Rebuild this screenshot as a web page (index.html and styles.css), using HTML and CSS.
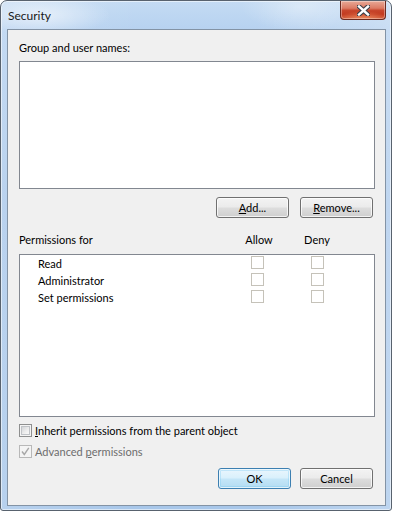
FILE: index.html
```html
<!DOCTYPE html>
<html>
<head>
<meta charset="utf-8">
<title>Security</title>
<link rel="stylesheet" href="styles.css">
</head>
<body>
<div class="window">
  <div class="titlebar">
    <span class="title">Security</span>
    <div class="close">
      <svg width="13" height="11" viewBox="0 0 13 11">
        <path d="M2 1.5 L11 9.5 M11 1.5 L2 9.5" stroke="#3a3f48" stroke-width="4.6" stroke-linecap="square" fill="none"/>
        <path d="M2 1.5 L11 9.5 M11 1.5 L2 9.5" stroke="#ffffff" stroke-width="2.4" stroke-linecap="square" fill="none"/>
      </svg>
    </div>
  </div>
  <div class="client">
    <div class="label">Group and user names:</div>
    <div class="listbox names"></div>
    <div class="btnrow top">
      <button class="btn"><u>A</u>dd...</button>
      <button class="btn"><u>R</u>emove...</button>
    </div>
    <div class="permhead">
      <span>Permissions for</span>
      <span class="col">Allow</span>
      <span></span>
      <span class="col">Deny</span>
    </div>
    <div class="listbox perms">
      <div class="prow"><span>Read</span><span class="cb"></span><span></span><span class="cb"></span></div>
      <div class="prow"><span>Administrator</span><span class="cb"></span><span></span><span class="cb"></span></div>
      <div class="prow"><span>Set permissions</span><span class="cb"></span><span></span><span class="cb"></span></div>
    </div>
    <div class="check first">
      <span class="box"><span class="inner"></span></span>
      <span><u>I</u>nherit permissions from the parent object</span>
    </div>
    <div class="check disabled">
      <span class="box checked">
        <svg width="11" height="11" viewBox="0 0 11 11"><path d="M2 5.5 L4.3 8.5 L8.8 1.8" stroke="#a8a8a8" stroke-width="1.4" fill="none"/></svg>
      </span>
      <span>Advanced <u>p</u>ermissions</span>
    </div>
    <div class="btnrow bottom">
      <button class="btn default">OK</button>
      <button class="btn">Cancel</button>
    </div>
  </div>
</div>
</body>
</html>
```
FILE: styles.css
```css
html, body {
  margin: 0;
  padding: 0;
  background: #ffffff;
}
body {
  width: 393px;
  height: 511px;
  overflow: hidden;
  font-family: "Lato", "Liberation Sans", sans-serif;
  font-size: 11px;
  color: #000;
}
.window {
  box-sizing: border-box;
  width: 392px;
  height: 511px;
  border: 1px solid #58626e;
  border-radius: 7px 7px 3px 3px;
  padding: 0 5px 4px 6px;
  display: flex;
  flex-direction: column;
  background:
    radial-gradient(ellipse 70px 20px at 40px 14px, rgba(255,255,255,0.55), rgba(255,255,255,0) 100%),
    radial-gradient(ellipse 60px 24px at 300px 6px, rgba(255,255,255,0.35), rgba(255,255,255,0) 100%),
    linear-gradient(90deg, rgba(255,255,255,0.18), rgba(255,255,255,0) 35%, rgba(255,255,255,0) 65%, rgba(255,255,255,0.25)),
    linear-gradient(180deg, #c4dbf3 0px, #b7d2f0 28px, #abc9eb 200px, #a8c7ea 100%);
  box-shadow: inset 0 0 0 1px rgba(255,255,255,0.55);
}
.titlebar {
  height: 28px;
  flex: none;
  display: flex;
  justify-content: space-between;
  align-items: flex-start;
}
.title {
  margin-top: 7px;
  margin-left: 1px;
  font-size: 12px;
  line-height: 16px;
  color: #1a1a1a;
}
.close {
  box-sizing: border-box;
  width: 46px;
  height: 19px;
  margin-right: 0;
  border: 1px solid #6b2a20;
  border-top: none;
  border-radius: 0 0 4px 4px;
  display: flex;
  align-items: center;
  justify-content: center;
  background:
    radial-gradient(ellipse 26px 8px at 50% 100%, rgba(255,170,120,0.65), rgba(255,170,120,0) 100%),
    linear-gradient(180deg, #e8a997 0%, #dc7b64 40%, #c8462c 52%, #c2391f 75%, #cd5434 100%);
  box-shadow: inset 0 0 0 1px rgba(255,255,255,0.35);
}
.close svg {
  display: block;
  margin-top: 1px;
}
.client {
  flex: 1;
  box-sizing: border-box;
  border: 1px solid #8393a5;
  background: #f0f0f0;
  padding: 11px 10px 0 11px;
  display: flex;
  flex-direction: column;
}
.label {
  line-height: 14px;
  height: 14px;
}
.listbox {
  box-sizing: border-box;
  border: 1px solid #828790;
  background: #ffffff;
}
.names {
  margin-top: 6px;
  height: 128px;
}
.btnrow {
  display: flex;
  justify-content: flex-end;
  padding-right: 2px;
}
.btnrow.top {
  margin-top: 8px;
  gap: 11px;
}
.btnrow.bottom {
  margin-top: 10px;
  gap: 9px;
}
.btn {
  box-sizing: border-box;
  width: 73px;
  height: 21px;
  padding: 0;
  margin: 0;
  font-family: "Lato", "Liberation Sans", sans-serif;
  font-size: 11px;
  line-height: 18px;
  color: #000;
  border: 1px solid #707070;
  border-radius: 3px;
  background: linear-gradient(180deg, #f3f3f3 0%, #ebebeb 48%, #dddddd 52%, #cfcfcf 100%);
  box-shadow: inset 0 0 0 1px rgba(255,255,255,0.75);
}
.btn.default {
  border-color: #3c7fb1;
  background: linear-gradient(180deg, #eaf6fd 0%, #d9f0fc 48%, #c4e6f8 52%, #b3dcf2 100%);
  box-shadow: inset 0 0 0 1px rgba(255,255,255,0.7), inset 0 0 0 2px rgba(120,200,240,0.35);
}
.permhead {
  margin-top: 15px;
  display: grid;
  grid-template-columns: 220px 40px 18px 40px;
  line-height: 14px;
  height: 14px;
}
.permhead .col {
  text-align: center;
}
.perms {
  margin-top: 7px;
  height: 163px;
  padding-left: 18px;
}
.prow {
  display: grid;
  grid-template-columns: 213px 13px 47px 13px;
  height: 17px;
  line-height: 17px;
  color: #000;
}
.cb {
  box-sizing: border-box;
  width: 13px;
  height: 13px;
  margin-top: 1px;
  border: 1px solid #c5c2b9;
  background: #ffffff;
}
.check {
  display: flex;
  align-items: center;
  gap: 3px;
  height: 13px;
  line-height: 13px;
}
.check.first {
  margin-top: 7px;
}
.check.disabled {
  margin-top: 8px;
  color: #6d6d6d;
}
.box {
  box-sizing: border-box;
  flex: none;
  width: 13px;
  height: 13px;
  border: 1px solid #8e8f8f;
  background: #f4f4f4;
  padding: 1px;
  display: flex;
}
.box .inner {
  flex: 1;
  border: 1px solid #c0c3c7;
  background: linear-gradient(135deg, #d3d5d8 0%, #eeeeee 60%, #f8f8f8 100%);
}
.box.checked {
  border-color: #b8b8b8;
  background: #f4f4f4;
  padding: 0;
  align-items: center;
  justify-content: center;
}
.box.checked svg {
  display: block;
}
u {
  text-decoration: underline;
  text-underline-offset: 1px;
}
```
